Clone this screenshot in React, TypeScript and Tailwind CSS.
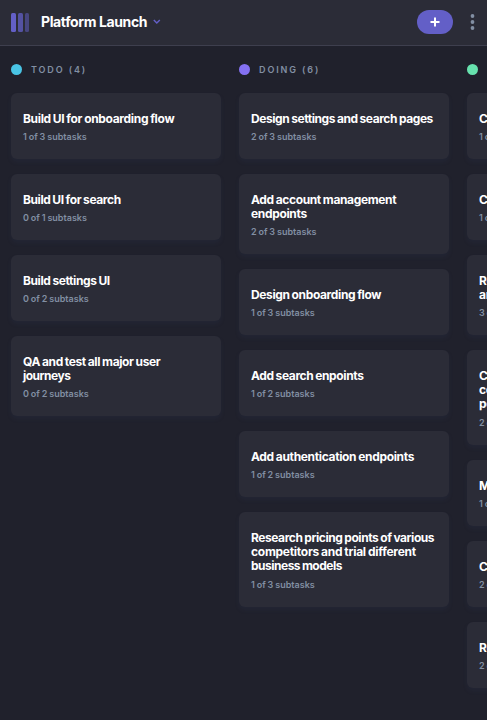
import React from "react";

type Line = { text: string; tracking: string };
type Task = { lines: Line[]; sub: string };
type Column = { name: string; dot: string; tasks: Task[] };

const columns: Column[] = [
  {
    name: "TODO (4)",
    dot: "bg-[#49c4e5]",
    tasks: [
      { lines: [{ text: "Build UI for onboarding flow", tracking: "tracking-[-0.33px]" }], sub: "1 of 3 subtasks" },
      { lines: [{ text: "Build UI for search", tracking: "tracking-[-0.41px]" }], sub: "0 of 1 subtasks" },
      { lines: [{ text: "Build settings UI", tracking: "tracking-[-0.4px]" }], sub: "0 of 2 subtasks" },
      {
        lines: [
          { text: "QA and test all major user", tracking: "tracking-[-0.38px]" },
          { text: "journeys", tracking: "tracking-[-0.5px]" },
        ],
        sub: "0 of 2 subtasks",
      },
    ],
  },
  {
    name: "DOING (6)",
    dot: "bg-[#8471f2]",
    tasks: [
      { lines: [{ text: "Design settings and search pages", tracking: "tracking-[-0.43px]" }], sub: "2 of 3 subtasks" },
      {
        lines: [
          { text: "Add account management", tracking: "tracking-[-0.37px]" },
          { text: "endpoints", tracking: "tracking-[-0.34px]" },
        ],
        sub: "2 of 3 subtasks",
      },
      { lines: [{ text: "Design onboarding flow", tracking: "tracking-[-0.37px]" }], sub: "1 of 3 subtasks" },
      { lines: [{ text: "Add search enpoints", tracking: "tracking-[-0.39px]" }], sub: "1 of 2 subtasks" },
      { lines: [{ text: "Add authentication endpoints", tracking: "tracking-[-0.34px]" }], sub: "1 of 2 subtasks" },
      {
        lines: [
          { text: "Research pricing points of various", tracking: "tracking-[-0.44px]" },
          { text: "competitors and trial different", tracking: "tracking-[-0.27px]" },
          { text: "business models", tracking: "tracking-[-0.5px]" },
        ],
        sub: "1 of 3 subtasks",
      },
    ],
  },
  {
    name: "DONE (7)",
    dot: "bg-[#67e2ae]",
    tasks: [
      { lines: [{ text: "Conduct 5 wireframe tests", tracking: "tracking-[-0.33px]" }], sub: "1 of 1 subtasks" },
      { lines: [{ text: "Create wireframe prototype", tracking: "tracking-[-0.33px]" }], sub: "1 of 1 subtasks" },
      {
        lines: [
          { text: "Review results of usability tests", tracking: "tracking-[-0.33px]" },
          { text: "and iterate", tracking: "tracking-[-0.33px]" },
        ],
        sub: "3 of 3 subtasks",
      },
      {
        lines: [
          { text: "Create paper prototypes and", tracking: "tracking-[-0.33px]" },
          { text: "conduct 10 usability tests with", tracking: "tracking-[-0.33px]" },
          { text: "potential customers", tracking: "tracking-[-0.33px]" },
        ],
        sub: "2 of 2 subtasks",
      },
      { lines: [{ text: "Market discovery", tracking: "tracking-[-0.33px]" }], sub: "1 of 1 subtasks" },
      { lines: [{ text: "Competitor analysis", tracking: "tracking-[-0.33px]" }], sub: "2 of 2 subtasks" },
      { lines: [{ text: "Research the market", tracking: "tracking-[-0.33px]" }], sub: "2 of 2 subtasks" },
    ],
  },
];

function Card({ task }: { task: Task }) {
  return (
    <article className="rounded-md bg-[#2b2c37] px-3 pt-[19px] pb-[16px] shadow-[0_3px_5px_rgba(54,78,126,0.10)]">
      <h3 className="text-[12px] leading-[14px] font-bold whitespace-nowrap text-white [word-spacing:-0.5px]">
        {task.lines.map((line) => (
          <span key={line.text} className={"block " + line.tracking}>
            {line.text}
          </span>
        ))}
      </h3>
      <p
        className={
          "text-[9px] leading-[13px] font-semibold tracking-[0.01px] whitespace-nowrap text-[#828fa3] [word-spacing:-0.4px] " +
          (task.lines.length > 2 ? "mt-[5px]" : "mt-1")
        }
      >
        {task.sub}
      </p>
    </article>
  );
}

export default function App() {
  return (
    <div className="flex h-[720px] w-full flex-col overflow-hidden bg-[#20212c] font-['Inter',sans-serif]">
      <header className="flex h-[46px] shrink-0 items-center border-b border-[#3e3f4e] bg-[#2b2c37] pr-3 pb-px pl-[11px]">
        <div className="flex gap-[2px]">
          <span className="h-[19px] w-[5px] rounded-[1.5px] bg-[#635fc7]" />
          <span className="h-[19px] w-[5px] rounded-[1.5px] bg-[#635fc7] opacity-75" />
          <span className="h-[19px] w-[4px] rounded-[1.5px] bg-[#635fc7] opacity-50" />
        </div>
        <h1 className="ml-3 text-[14px] leading-5 font-bold tracking-[-0.38px] whitespace-nowrap text-white">
          Platform Launch
        </h1>
        <svg className="ml-[6px]" width="8" height="6" viewBox="0 0 8 6" fill="none" stroke="#635fc7" strokeWidth="1.5">
          <path d="M.8 1l3 3 3-3" />
        </svg>
        <button className="ml-auto flex h-6 w-9 items-center justify-center rounded-full bg-[#635fc7]">
          <svg width="10" height="10" viewBox="0 0 10 10" fill="#fff">
            <path d="M4 .5h2V4h3.500v2H6v3.500H4V6H.5V4H4z" />
          </svg>
        </button>
        <svg className="ml-[17px]" width="5" height="16" viewBox="0 0 5 16" fill="#828fa3">
          <circle cx="2.500" cy="2" r="1.900" />
          <circle cx="2.500" cy="8" r="1.900" />
          <circle cx="2.500" cy="14" r="1.900" />
        </svg>
      </header>
      <main className="flex flex-1 gap-[18px] pt-4 pl-[11px]">
        {columns.map((col) => (
          <section key={col.name} className="w-[210px] shrink-0">
            <div className="flex h-[15px] items-center gap-[9px]">
              <span className={"size-[11px] rounded-full " + col.dot} />
              <h2 className="text-[9px] leading-[15px] font-semibold tracking-[1.88px] whitespace-nowrap text-[#828fa3]">
                {col.name}
              </h2>
            </div>
            <div className="mt-4 flex flex-col gap-[15px]">
              {col.tasks.map((t) => (
                <Card key={t.lines[0].text} task={t} />
              ))}
            </div>
          </section>
        ))}
      </main>
    </div>
  );
}
